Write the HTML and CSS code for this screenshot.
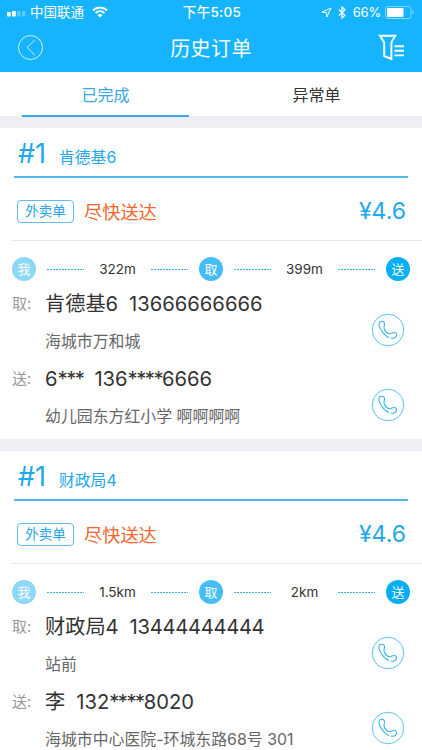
FILE: index.html
```html
<!DOCTYPE html>
<html lang="zh-CN">
<head>
    <meta charset="UTF-8">
    <meta name="viewport" content="width=device-width, initial-scale=1.0">
    <title>历史订单</title>
    <link rel="stylesheet" href="styles.css">
</head>
<body>

    <!-- Shared icons -->
    <svg class="icon-defs" width="0" height="0">
        <symbol id="phone" viewBox="0 0 34 34">
            <circle cx="17" cy="17" r="15.8" stroke-width="0.8"/>
            <path stroke-width="1.100" d="M17.800 24.800C13.500 22 9.400 17.200 8.100 12.600C7.500 10 8.700 8.300 10.700 8.300C13 8.300 13.900 10 13.400 11.800C13 13.300 12.600 14.700 13.300 16.300C14.300 18.600 16.300 20.300 18.400 20.700C20.300 21 21.600 19.200 23.400 19.500C25.300 19.800 26 21.400 25.500 22.800C24.800 24.900 22.300 25.800 19.900 25"/>
        </symbol>
    </svg>

    <header class="topbar">
        <div class="status">
            <div class="status-left">
                <svg class="signal" width="19" height="6" viewBox="0 0 19 6" fill="#fff">
                    <rect x="0" y="1" width="3.800" height="4.500" rx="0.8"/>
                    <rect x="5" y="0" width="3.800" height="5.500" rx="0.8"/>
                    <rect x="10" y="0" width="3.500" height="5.500" rx="0.8" opacity="0.3"/>
                    <rect x="15" y="0" width="3.500" height="5.500" rx="0.8" opacity="0.3"/>
                </svg>
                <span class="carrier">中国联通</span>
                <svg class="wifi" width="16" height="12" viewBox="0 0 16 12" fill="none" stroke="#fff" stroke-width="2">
                    <path d="M1 4.200C5 0.500 11 0.500 15 4.200"/>
                    <path d="M3.600 7C6.200 4.600 9.800 4.600 12.400 7"/>
                    <path d="M8 11.500L5.500 9C7 7.600 9 7.600 10.500 9Z" fill="#fff" stroke="none"/>
                </svg>
            </div>
            <span class="time">下午5:05</span>
            <div class="status-right">
                <svg width="11" height="11" viewBox="0 0 11 11" fill="none" stroke="#fff" stroke-width="1">
                    <path d="M10 1L1 5.200L5.500 5.500L5.900 10Z"/>
                </svg>
                <svg class="bluetooth" width="8" height="13" viewBox="0 0 8 13" fill="none" stroke="#fff" stroke-width="1.200">
                    <path d="M0.800 3.500L7 9.200L4 12V1L7 3.800L0.800 9.500"/>
                </svg>
                <span class="percent">66%</span>
                <svg width="30" height="13" viewBox="0 0 30 13">
                    <rect x="0.500" y="0.500" width="25.500" height="12" rx="2.500" fill="none" stroke="#fff" opacity="0.45"/>
                    <rect x="2" y="2" width="16.500" height="9" rx="1" fill="#fff"/>
                    <path d="M27.500 4.500Q30 6.500 27.500 8.500Z" fill="#fff" opacity="0.5"/>
                </svg>
            </div>
        </div>
        <div class="navbar">
            <svg class="back" width="26" height="26" viewBox="0 0 26 26" fill="none" stroke="#fff" stroke-width="0.8">
                <circle cx="12.500" cy="12.500" r="12"/>
                <path d="M16.800 5L9 12.500L16.800 20"/>
            </svg>
            <h1>历史订单</h1>
            <svg class="filter" width="26" height="27" viewBox="0 0 26 27" fill="none" stroke="#fff" stroke-width="1.900">
                <path d="M2 1.700H17.200L13.400 8.500V25L6.200 22V8.500Z"/>
                <path d="M16.500 12.200H26M16.500 16.800H26M16.500 21.400H26"/>
            </svg>
        </div>
    </header>

    <nav class="tabs">
        <a class="tab active">已完成</a>
        <a class="tab">异常单</a>
    </nav>

    <main class="orders">
        <section class="order">
            <div class="order-head">
                <span class="order-no">#1</span>
                <span class="shop">肯德基6</span>
            </div>
            <div class="order-info">
                <span class="tag">外卖单</span>
                <span class="deadline">尽快送达</span>
                <span class="price">¥4.6</span>
            </div>
            <div class="route">
                <span class="stop me">我</span>
                <i class="dots"></i>
                <span class="distance">322m</span>
                <i class="dots"></i>
                <span class="stop pick">取</span>
                <i class="dots"></i>
                <span class="distance">399m</span>
                <i class="dots"></i>
                <span class="stop drop">送</span>
            </div>
            <div class="contact">
                <span class="label">取:</span>
                <div class="detail">
                    <p class="name"><span>肯德基6</span><span class="tel">13666666666</span></p>
                    <p class="address">海城市万和城</p>
                </div>
                <svg class="call"><use href="#phone"/></svg>
            </div>
            <div class="contact">
                <span class="label">送:</span>
                <div class="detail">
                    <p class="name"><span>6<span class="mask">***</span></span><span class="tel">136<span class="mask">****</span>6666</span></p>
                    <p class="address">幼儿园东方红小学 啊啊啊啊</p>
                </div>
                <svg class="call"><use href="#phone"/></svg>
            </div>
        </section>

        <section class="order">
            <div class="order-head">
                <span class="order-no">#1</span>
                <span class="shop">财政局4</span>
            </div>
            <div class="order-info">
                <span class="tag">外卖单</span>
                <span class="deadline">尽快送达</span>
                <span class="price">¥4.6</span>
            </div>
            <div class="route">
                <span class="stop me">我</span>
                <i class="dots"></i>
                <span class="distance">1.5km</span>
                <i class="dots"></i>
                <span class="stop pick">取</span>
                <i class="dots"></i>
                <span class="distance">2km</span>
                <i class="dots"></i>
                <span class="stop drop">送</span>
            </div>
            <div class="contact">
                <span class="label">取:</span>
                <div class="detail">
                    <p class="name"><span>财政局4</span><span class="tel tight">13444444444</span></p>
                    <p class="address">站前</p>
                </div>
                <svg class="call"><use href="#phone"/></svg>
            </div>
            <div class="contact">
                <span class="label">送:</span>
                <div class="detail">
                    <p class="name"><span>李</span><span class="tel">132<span class="mask">****</span>8020</span></p>
                    <p class="address">海城市中心医院-环城东路68号 301</p>
                </div>
                <svg class="call"><use href="#phone"/></svg>
            </div>
        </section>
    </main>

</body>
</html>
```
FILE: styles.css
```css
/* General Styles */
* {
    box-sizing: border-box;
}

body {
    margin: 0;
    height: 750px;
    overflow: hidden;
    background: #efeef4;
    font-family: Inter, "Noto Sans CJK SC", sans-serif;
    color: #333;
    white-space: nowrap;
}

h1, p {
    margin: 0;
    font-weight: normal;
}

svg {
    display: block;
    flex-shrink: 0;
}

.icon-defs {
    display: none;
}

/* Header */
.topbar {
    height: 72px;
    background: #16b4fe;
    color: #fff;
}

.status {
    display: grid;
    grid-template-columns: 1fr auto 1fr;
    align-items: center;
    height: 24px;
    padding: 0 7px 0 7px;
    font-size: 13px;
    line-height: 24px;
}

.status-left, .status-right {
    display: flex;
    align-items: center;
}

.status-right {
    justify-content: flex-end;
}

.signal {
    margin: 4px 4px 0 0;
}

.carrier {
    font-size: 13.5px;
}

.wifi {
    margin-left: 8px;
}

.time {
    padding-left: 2px;
    font-size: 13.500px;
    font-weight: 500;
    letter-spacing: 0.3px;
}

.bluetooth {
    margin: 0 7px 0 6px;
}

.percent {
    margin-right: 4px;
    letter-spacing: -0.2px;
}

.navbar {
    display: flex;
    align-items: center;
    justify-content: space-between;
    height: 47px;
    padding: 0 18px;
}

.navbar h1 {
    font-size: 20px;
    letter-spacing: 0.4px;
}

.filter {
    margin-top: -1px;
}

/* Tabs */
.tabs {
    display: flex;
    justify-content: space-between;
    height: 44px;
    padding: 0 22px;
    background: #fff;
}

.tab {
    width: 167px;
    height: 45px;
    font-size: 16px;
    line-height: 46px;
    text-align: center;
}

.tab.active {
    color: #36a9e0;
    border-bottom: 2px solid #36a9e0;
}

/* Orders */
.order {
    height: 311px;
    margin-top: 12px;
    background: #fff;
}

.order-head {
    display: flex;
    align-items: baseline;
    height: 50px;
    margin: 0 14px;
    padding-left: 4px;
    border-bottom: 2px solid #4fb9e8;
    color: #22a7e8;
    line-height: 51px;
}

.order-no {
    width: 41px;
    font-size: 27px;
}

.shop {
    font-size: 15.800px;
}

.order-info {
    display: flex;
    align-items: center;
    height: 63px;
    margin-left: 12px;
    padding: 4px 16px 0 5px;
    border-bottom: 1px solid #e5e5e5;
}

.tag {
    width: 57px;
    height: 23px;
    border: 1px solid #60bdf0;
    border-radius: 4px;
    color: #2aa5e6;
    font-size: 13.500px;
    line-height: 21px;
    text-align: center;
}

.deadline {
    margin-left: 10px;
    color: #f2652d;
    font-size: 18.200px;
}

.price {
    margin-left: auto;
    color: #22a7f0;
    font-size: 23px;
}

.route {
    display: grid;
    grid-template-columns: 24px 37px 1fr 37px 24px 37px 1fr 37px 24px;
    column-gap: 11px;
    align-items: center;
    height: 24px;
    margin: 16px 12px 0;
}

.stop {
    width: 24px;
    height: 24px;
    border-radius: 50%;
    color: #fff;
    font-size: 13px;
    line-height: 24px;
    text-align: center;
}

.stop.me {
    background: #8dd7f7;
}

.stop.pick {
    background: #45bdf5;
}

.stop.drop {
    background: #06aef5;
}

.dots {
    height: 1px;
    background: repeating-linear-gradient(90deg, #35b2e4 0 2px, transparent 2px 3px);
}

.distance {
    font-size: 13.500px;
    text-align: center;
}

.contact {
    display: flex;
    align-items: flex-start;
    height: 75px;
    padding: 4px 17px 0 12px;
}

.label {
    width: 33px;
    color: #999;
    font-size: 15px;
    line-height: 38px;
}

.detail {
    flex: 1;
}

.name {
    font-size: 20.200px;
    line-height: 37px;
}

.tel {
    margin-left: 11px;
}

.tel.tight {
    letter-spacing: -0.3px;
}

.mask {
    letter-spacing: -1.500px;
}

.address {
    color: #666;
    font-size: 15.900px;
    line-height: 40px;
}

.call {
    width: 34px;
    height: 34px;
    margin-top: 28px;
    fill: none;
    stroke: #35b5ec;
}
```
